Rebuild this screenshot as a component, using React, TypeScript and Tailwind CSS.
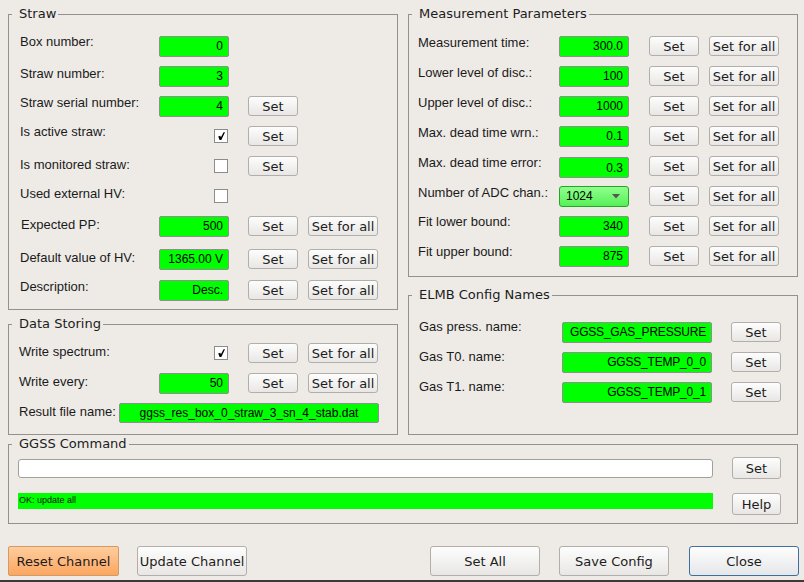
import React from "react";

const LAB = "font-['Liberation_Sans',Arial,sans-serif]";
const DJ = "font-['DejaVu_Sans',Verdana,sans-serif]";

function Btn({ className = "", children }: { className?: string; children: React.ReactNode }) {
  return (
    <div
      className={`flex shrink-0 items-center justify-center rounded-[3px] border border-[#b2aea9] bg-gradient-to-b from-[#fdfdfd] to-[#e8e7e5] text-[13px] leading-none text-[#1c1c1c] font-['DejaVu_Sans',Verdana,sans-serif] ${className}`}
    >
      {children}
    </div>
  );
}

function Field({ value, className = "" }: { value: string; className?: string }) {
  return (
    <div
      className={`flex h-[21px] shrink-0 items-center justify-end overflow-hidden whitespace-nowrap rounded-[2px] border border-[#8f8f8f] bg-[#00ff00] pr-[5px] text-[12px] leading-none text-black font-['Liberation_Sans',Arial,sans-serif] ${className}`}
    >
      {value}
    </div>
  );
}

function Check({ checked }: { checked?: boolean }) {
  return (
    <div className="flex h-[14px] w-[14px] items-center justify-center border border-[#8c8c8c] bg-white">
      {checked && (
        <svg width="10" height="10" viewBox="0 0 10 10">
          <polygon points="2.2,5.4 4.3,4.8 4.9,6.2 7.6,1.2 9,1.2 5.3,9 3.6,9" fill="#000" />
        </svg>
      )}
    </div>
  );
}

function Group({
  title,
  className = "",
  inner = "",
  children,
}: {
  title: string;
  className?: string;
  inner?: string;
  children: React.ReactNode;
}) {
  return (
    <fieldset className={`shrink-0 border border-[#93918e] ${className}`}>
      <legend className={`ml-[3px] pl-[7px] pr-[2px] text-[13px] leading-[16px] text-[#1c1c1c] ${DJ}`}>{title}</legend>
      <div className={inner}>{children}</div>
    </fieldset>
  );
}

export default function App() {
  return (
    <div className={`flex h-[582px] w-[804px] flex-col overflow-hidden bg-[#eeebe7] text-[#1a1a1a] ${LAB}`}>
      <div className="flex gap-[10px] pl-[8px] pt-[6px]">
        {/* Left column */}
        <div className="flex w-[390px] flex-col">
          <Group title="Straw" className="h-[304px]" inner="pl-[11px] pt-[9px]">
            <div className="flex h-[30px] items-center">
              <div className="mb-[8px] w-[139px] text-[13px] leading-[16px]">Box number:</div>
              <Field value="0" className="w-[70px]" />
            </div>
            <div className="flex h-[30px] items-center">
              <div className="mb-[4px] w-[139px] text-[13px] leading-[16px]">Straw number:</div>
              <Field value="3" className="w-[70px]" />
            </div>
            <div className="flex h-[30px] items-center">
              <div className="mb-[7px] w-[139px] text-[13px] leading-[16px]">Straw serial number:</div>
              <Field value="4" className="w-[70px]" />
              <Btn className="ml-[19px] h-[20px] w-[50px]">Set</Btn>
            </div>
            <div className="flex h-[30px] items-center">
              <div className="mb-[9px] w-[139px] text-[13px] leading-[16px]">Is active straw:</div>
              <div className="flex w-[70px] justify-end pr-[1px]">
                <Check checked />
              </div>
              <Btn className="ml-[19px] h-[20px] w-[50px]">Set</Btn>
            </div>
            <div className="flex h-[30px] items-center">
              <div className="mb-[3px] w-[139px] text-[13px] leading-[16px]">Is monitored straw:</div>
              <div className="flex w-[70px] justify-end pr-[1px]">
                <Check />
              </div>
              <Btn className="ml-[19px] h-[20px] w-[50px]">Set</Btn>
            </div>
            <div className="flex h-[30px] items-center">
              <div className="mb-[5px] w-[139px] text-[13px] leading-[16px]">Used external HV:</div>
              <div className="flex w-[70px] justify-end pr-[1px]">
                <Check />
              </div>
            </div>
            <div className="flex h-[30px] items-center">
              <div className="mb-[3px] w-[139px] pl-[1px] text-[13px] leading-[16px]">Expected PP:</div>
              <Field value="500" className="w-[70px]" />
              <Btn className="ml-[19px] h-[20px] w-[50px]">Set</Btn>
              <Btn className="ml-[10px] h-[20px] w-[70px]">Set for all</Btn>
            </div>
            <div className="mt-[3px] flex h-[30px] items-center">
              <div className="mb-[3px] w-[139px] text-[13px] leading-[16px]">Default value of HV:</div>
              <Field value="1365.00 V" className="w-[70px]" />
              <Btn className="ml-[19px] h-[20px] w-[50px]">Set</Btn>
              <Btn className="ml-[10px] h-[20px] w-[70px]">Set for all</Btn>
            </div>
            <div className="mt-[1px] flex h-[30px] items-center">
              <div className="mb-[6px] w-[139px] text-[13px] leading-[16px]">Description:</div>
              <Field value="Desc." className="w-[70px]" />
              <Btn className="ml-[19px] h-[20px] w-[50px]">Set</Btn>
              <Btn className="ml-[10px] h-[20px] w-[70px]">Set for all</Btn>
            </div>
          </Group>

          <Group title="Data Storing" className="mt-[6px] h-[119px]" inner="pl-[10px] pt-[6px]">
            <div className="flex h-[30px] items-center">
              <div className="mb-[2px] w-[140px] text-[13px] leading-[16px]">Write spectrum:</div>
              <div className="flex w-[70px] justify-end pr-[1px]">
                <Check checked />
              </div>
              <Btn className="ml-[19px] h-[20px] w-[50px]">Set</Btn>
              <Btn className="ml-[10px] h-[20px] w-[70px]">Set for all</Btn>
            </div>
            <div className="flex h-[30px] items-center">
              <div className="mb-[2px] w-[140px] text-[13px] leading-[16px]">Write every:</div>
              <Field value="50" className="w-[70px]" />
              <Btn className="ml-[19px] h-[20px] w-[50px]">Set</Btn>
              <Btn className="ml-[10px] h-[20px] w-[70px]">Set for all</Btn>
            </div>
            <div className="flex h-[30px] items-center">
              <div className="mb-[2px] w-[100px] text-[13px] leading-[16px]">Result file name:</div>
              <div className="flex h-[20px] w-[260px] items-center justify-center rounded-[2px] border border-[#8f8f8f] bg-[#00ff00] text-[12px] leading-none text-black">
                ggss_res_box_0_straw_3_sn_4_stab.dat
              </div>
            </div>
          </Group>
        </div>

        {/* Right column */}
        <div className="flex w-[390px] flex-col">
          <Group title="Measurement Parameters" className="h-[271px]" inner="pl-[9px] pt-[9px]">
            {[
              ["Measurement time:", "300.0", ""],
              ["Lower level of disc.:", "100", ""],
              ["Upper level of disc.:", "1000", ""],
              ["Max. dead time wrn.:", "0.1", ""],
              ["Max. dead time error:", "0.3", "mt-[3px]"],
            ].map(([label, value, extra]) => (
              <div key={label} className="flex h-[30px] items-center">
                <div className="mb-[7px] w-[141px] text-[13px] leading-[16px]">{label}</div>
                <Field value={value} className={`w-[70px] ${extra}`} />
                <Btn className="ml-[20px] h-[20px] w-[50px]">Set</Btn>
                <Btn className="ml-[10px] h-[20px] w-[70px]">Set for all</Btn>
              </div>
            ))}
            <div className="flex h-[30px] items-center">
              <div className="mb-[7px] w-[141px] text-[13px] leading-[16px]">Number of ADC chan.:</div>
              <div className="flex h-[21px] w-[70px] items-center justify-between rounded-[3px] border border-[#27a327] bg-gradient-to-b from-[#8dff8d] to-[#55f055] pl-[6px] pr-[8px] text-[12px] leading-none text-black">
                <span>1024</span>
                <svg width="8" height="5" viewBox="0 0 8 5">
                  <path d="M0 0 L8 0 L4 4.5 Z" fill="#555" />
                </svg>
              </div>
              <Btn className="ml-[20px] h-[20px] w-[50px]">Set</Btn>
              <Btn className="ml-[10px] h-[20px] w-[70px]">Set for all</Btn>
            </div>
            {[
              ["Fit lower bound:", "340"],
              ["Fit upper bound:", "875"],
            ].map(([label, value]) => (
              <div key={label} className="flex h-[30px] items-center">
                <div className="mb-[8px] w-[141px] text-[13px] leading-[16px]">{label}</div>
                <Field value={value} className="w-[70px]" />
                <Btn className="ml-[20px] h-[20px] w-[50px]">Set</Btn>
                <Btn className="ml-[10px] h-[20px] w-[70px]">Set for all</Btn>
              </div>
            ))}
          </Group>

          <Group title="ELMB Config Names" className="mt-[10px] h-[148px]" inner="pl-[10px] pt-[14px]">
            {[
              ["Gas press. name:", "GGSS_GAS_PRESSURE"],
              ["Gas T0. name:", "GGSS_TEMP_0_0"],
              ["Gas T1. name:", "GGSS_TEMP_0_1"],
            ].map(([label, value]) => (
              <div key={label} className="flex h-[30px] items-center">
                <div className="mb-[10px] w-[143px] text-[13px] leading-[16px]">{label}</div>
                <Field value={value} className="w-[150px] tracking-[-0.2px]" />
                <Btn className="ml-[19px] h-[20px] w-[50px]">Set</Btn>
              </div>
            ))}
          </Group>
        </div>
      </div>

      {/* GGSS Command */}
      <div className="pl-[8px]">
        <Group title="GGSS Command" className="mt-[1px] h-[88px] w-[790px]" inner="pl-[9px] pt-[5px]">
          <div className="flex h-[22px] items-center">
            <div className="h-[19px] w-[695px] rounded-[3px] border border-[#a3a09c] bg-white" />
            <Btn className="ml-[19px] h-[22px] w-[49px]">Set</Btn>
          </div>
          <div className="mt-[14px] flex items-start">
            <div className="h-[16px] w-[695px] bg-[#00ff00] pl-[1px] pt-[2px] text-[9px] leading-[11px] text-[#111]">
              OK: update all
            </div>
            <Btn className="ml-[19px] h-[22px] w-[49px]">Help</Btn>
          </div>
        </Group>
      </div>

      {/* Bottom buttons */}
      <div className="mt-[22px] flex pl-[8px] pr-[5px]">
        <div className="flex h-[30px] w-[111px] shrink-0 items-center justify-center rounded-[2px] border border-[#d49a64] bg-gradient-to-b from-[#ffcd9c] to-[#fba660] text-[13px] leading-none text-[#1c1c1c] font-['DejaVu_Sans',Verdana,sans-serif]">
          Reset Channel
        </div>
        <Btn className="ml-[18px] h-[30px] w-[110px] border-[#a9a6a2]">Update Channel</Btn>
        <Btn className="ml-auto h-[30px] w-[110px] border-[#a9a6a2]">Set All</Btn>
        <Btn className="ml-[19px] h-[30px] w-[110px] border-[#a9a6a2]">Save Config</Btn>
        <div className="ml-[20px] flex h-[30px] w-[110px] shrink-0 items-center justify-center rounded-[3px] border border-[#3d6f9f] bg-gradient-to-b from-[#fdfdfd] to-[#e6e7e9] text-[13px] leading-none text-[#1c1c1c] font-['DejaVu_Sans',Verdana,sans-serif]">
          Close
        </div>
      </div>

      <div className="mt-auto h-[2px] bg-[#3a3a3a]" />
    </div>
  );
}
